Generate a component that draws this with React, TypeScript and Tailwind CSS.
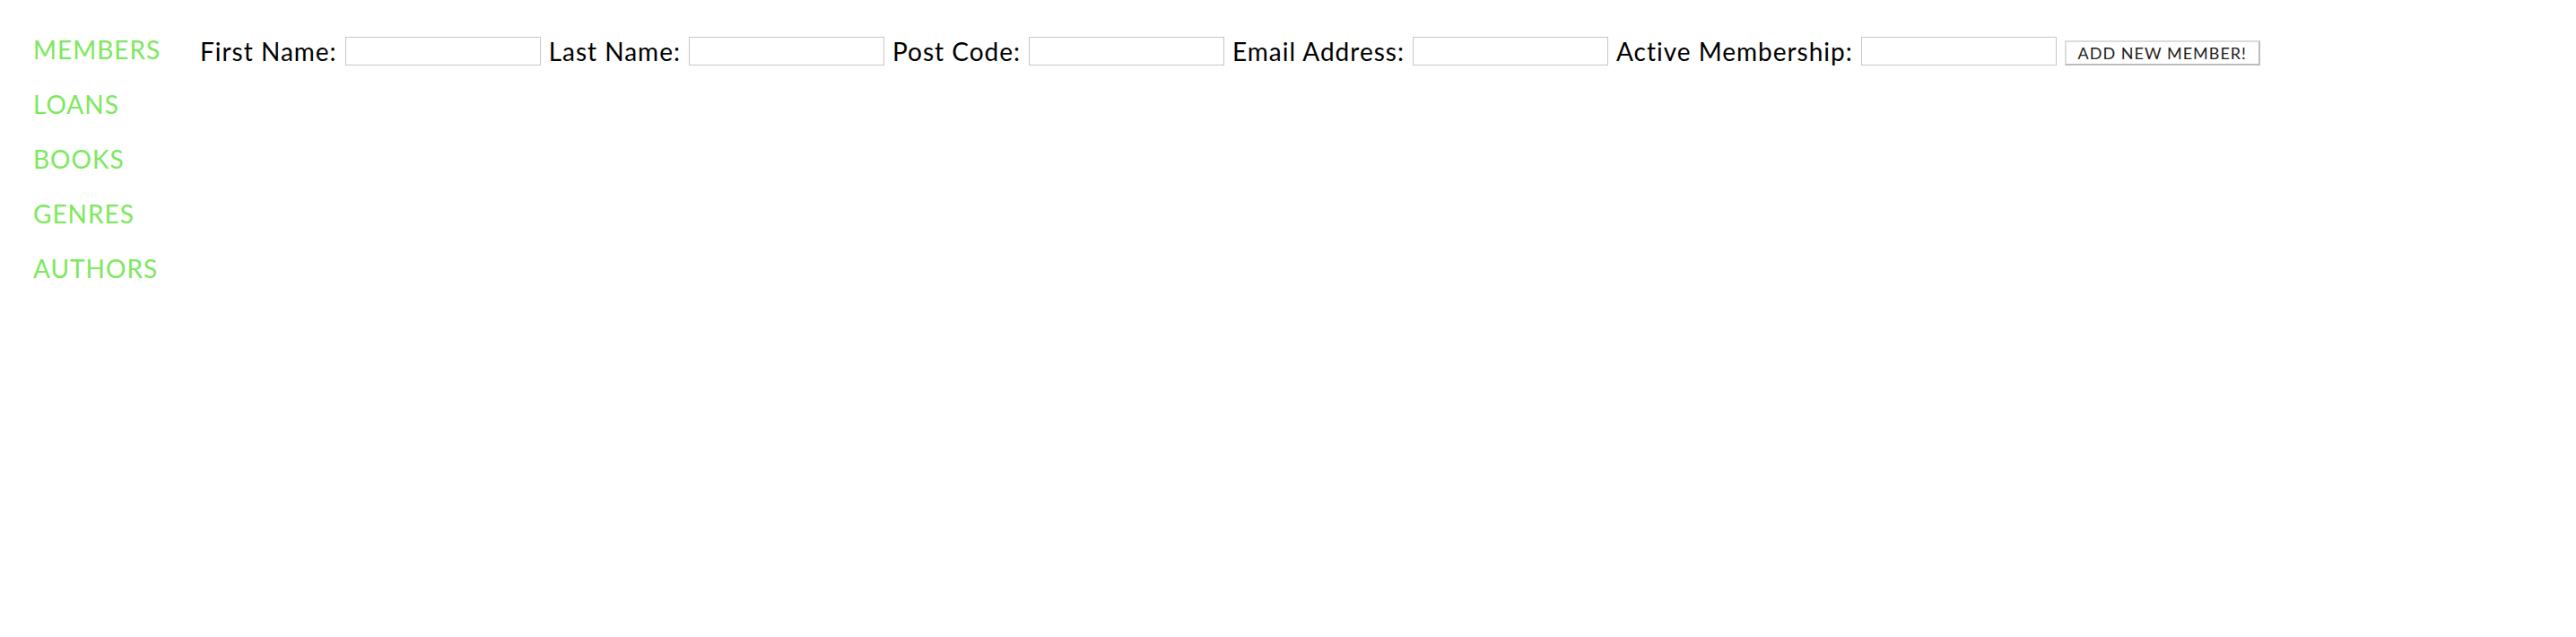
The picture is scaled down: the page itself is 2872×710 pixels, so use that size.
const links = ['MEMBERS', 'LOANS', 'BOOKS', 'GENRES', 'AUTHORS']

const fields = ['First Name:', 'Last Name:', 'Post Code:', 'Email Address:', 'Active Membership:']

export default function App() {
  return (
    <div className="flex min-h-[710px] bg-white text-black" style={{ fontFamily: 'Lato, "Open Sans", sans-serif' }}>
      <nav className="w-[223px] shrink-0 pl-[37px] pt-[25px]">
        {links.map((l) => (
          <a key={l} href="#" className="block text-[28px] leading-[61px] tracking-[1px] text-[#7de85d]">
            {l}
          </a>
        ))}
      </nav>
      <form className="flex items-center gap-[9px] self-start pt-[41px]" onSubmit={(e) => e.preventDefault()}>
        {fields.map((f) => (
          <label key={f} className="flex items-center gap-[9px]">
            <span className="text-[28px] leading-[32px] tracking-[1px] whitespace-nowrap">{f}</span>
            <input type="text" className="h-[32px] w-[218px] border border-[#c6c6c6] bg-white" />
          </label>
        ))}
        <button type="submit" className="mt-[4px] h-[28px] w-[218px] border-2 border-t-[#dcdcdc] border-l-[#dcdcdc] border-b-[#bdbdbd] border-r-[#bdbdbd] bg-white text-[18px] leading-none tracking-[1px] text-[#222]">
          ADD NEW MEMBER!
        </button>
      </form>
    </div>
  )
}
